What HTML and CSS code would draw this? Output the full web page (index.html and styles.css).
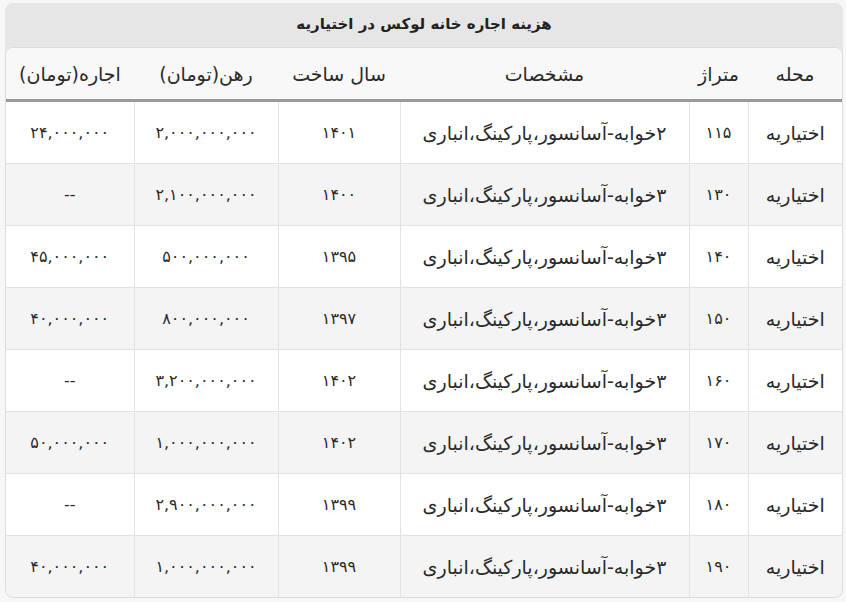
FILE: index.html
```html
<!DOCTYPE html>
<html lang="fa" dir="rtl">
<head>
<meta charset="utf-8">
<link rel="stylesheet" href="styles.css">
</head>
<body>
<div class="card">
  <div class="caption">هزینه اجاره خانه لوکس در اختیاریه</div>
  <div class="table-wrap">
    <table class="grid">
      <colgroup>
        <col class="c-area"><col class="c-size"><col class="c-spec"><col class="c-year"><col class="c-mortgage"><col class="c-rent">
      </colgroup>
      <thead>
        <tr><th>محله</th><th>متراژ</th><th>مشخصات</th><th>سال ساخت</th><th>رهن(تومان)</th><th>اجاره(تومان)</th></tr>
      </thead>
      <tbody>
        <tr><td class="txt">اختیاریه</td><td>۱۱۵</td><td class="txt">۲خوابه-آسانسور،پارکینگ،انباری</td><td>۱۴۰۱</td><td>۲,۰۰۰,۰۰۰,۰۰۰</td><td>۲۴,۰۰۰,۰۰۰</td></tr>
        <tr><td class="txt">اختیاریه</td><td>۱۳۰</td><td class="txt">۳خوابه-آسانسور،پارکینگ،انباری</td><td>۱۴۰۰</td><td>۲,۱۰۰,۰۰۰,۰۰۰</td><td>--</td></tr>
        <tr><td class="txt">اختیاریه</td><td>۱۴۰</td><td class="txt">۳خوابه-آسانسور،پارکینگ،انباری</td><td>۱۳۹۵</td><td>۵۰۰,۰۰۰,۰۰۰</td><td>۴۵,۰۰۰,۰۰۰</td></tr>
        <tr><td class="txt">اختیاریه</td><td>۱۵۰</td><td class="txt">۳خوابه-آسانسور،پارکینگ،انباری</td><td>۱۳۹۷</td><td>۸۰۰,۰۰۰,۰۰۰</td><td>۴۰,۰۰۰,۰۰۰</td></tr>
        <tr><td class="txt">اختیاریه</td><td>۱۶۰</td><td class="txt">۳خوابه-آسانسور،پارکینگ،انباری</td><td>۱۴۰۲</td><td>۳,۲۰۰,۰۰۰,۰۰۰</td><td>--</td></tr>
        <tr><td class="txt">اختیاریه</td><td>۱۷۰</td><td class="txt">۳خوابه-آسانسور،پارکینگ،انباری</td><td>۱۴۰۲</td><td>۱,۰۰۰,۰۰۰,۰۰۰</td><td>۵۰,۰۰۰,۰۰۰</td></tr>
        <tr><td class="txt">اختیاریه</td><td>۱۸۰</td><td class="txt">۳خوابه-آسانسور،پارکینگ،انباری</td><td>۱۳۹۹</td><td>۲,۹۰۰,۰۰۰,۰۰۰</td><td>--</td></tr>
        <tr><td class="txt">اختیاریه</td><td>۱۹۰</td><td class="txt">۳خوابه-آسانسور،پارکینگ،انباری</td><td>۱۳۹۹</td><td>۱,۰۰۰,۰۰۰,۰۰۰</td><td>۴۰,۰۰۰,۰۰۰</td></tr>
      </tbody>
    </table>
  </div>
</div>
</body>
</html>
```

FILE: styles.css
```css
html, body {
  margin: 0;
  padding: 0;
  background: #f7f7f7;
}
body {
  padding: 3px 3px 0 5px;
  font-family: "DejaVu Sans", "Noto Sans", sans-serif;
  color: #2a2a2a;
}
.card {
  width: 838px;
  background: #e6e6e6;
  border-radius: 8px;
}
.caption {
  height: 44px;
  line-height: 42px;
  text-align: center;
  font-size: 15px;
  font-weight: bold;
  color: #222;
}
.table-wrap {
  background: #fff;
  border: 1px solid #dcdcdc;
  border-radius: 8px;
  overflow: hidden;
}
.grid {
  width: 100%;
  border-collapse: collapse;
  table-layout: fixed;
}
.c-area { width: 94px; }
.c-size { width: 59px; }
.c-spec { width: 289px; }
.c-year { width: 122px; }
.c-mortgage { width: 144px; }
.c-rent { width: auto; }
.grid th {
  height: 51px;
  font-weight: normal;
  font-size: 19px;
  background: #f8f8f8;
  border-bottom: 3px solid #999;
  text-align: center;
  padding: 0;
}
.grid td {
  height: 61px;
  padding: 0;
  text-align: center;
  font-size: 16px;
  border-left: 1px solid #e2e2e2;
  border-top: 1px solid #e2e2e2;
}
.grid td.txt { font-size: 19px; }
.grid td:last-child { border-left: none; }
.grid tbody tr:first-child td { border-top: none; }
.grid tbody tr:nth-child(even) td { background: #f4f4f4; }
```
